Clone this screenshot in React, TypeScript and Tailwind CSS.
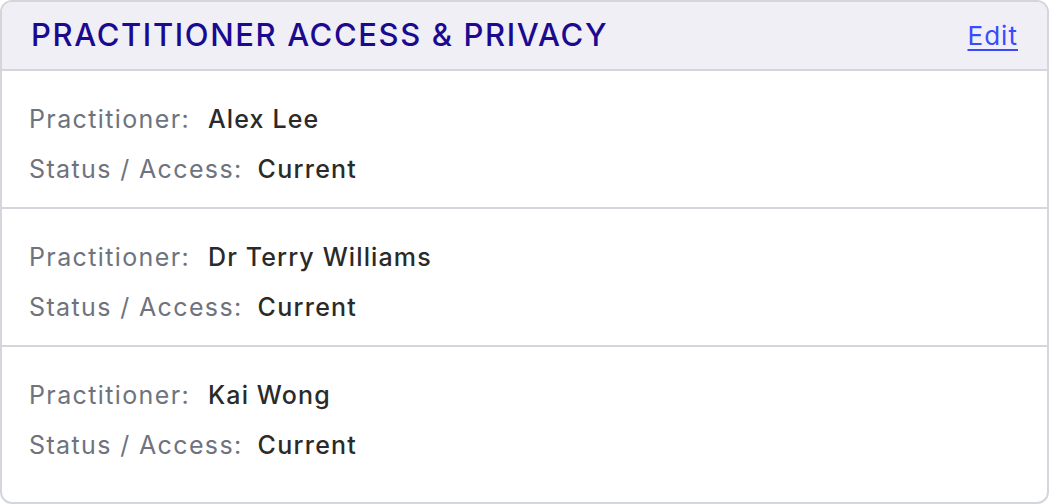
export default function App() {
  const practitioners = [
    { name: 'Alex Lee', status: 'Current' },
    { name: 'Dr Terry Williams', status: 'Current' },
    { name: 'Kai Wong', status: 'Current' },
  ];

  return (
    <div className="h-[504px] w-[1049px] bg-white" style={{ fontFamily: 'Inter, "Noto Sans", sans-serif' }}>
      <div className="h-[504px] overflow-hidden rounded-[12px] border-2 border-[#d4d6dc] bg-white">
        <div className="flex h-[69px] items-center justify-between border-b-2 border-[#d4d6dc] bg-[#f0eff5] pl-[29px] pr-[29px]">
          <h2 className="text-[31px] font-medium tracking-[0.052em] text-[#1b0a8f]">
            PRACTITIONER ACCESS &amp; PRIVACY
          </h2>
          <a href="#" className="text-[26px] tracking-[0.04em] text-[#3a4bff] underline underline-offset-4">
            Edit
          </a>
        </div>
        {practitioners.map((p, i) => (
          <div
            key={p.name}
            className={`flex flex-col gap-4 px-[27px] pt-[32px] ${
              i < practitioners.length - 1 ? 'border-b-2 border-[#d4d6dc] pb-[20px]' : 'pb-[20px]'
            }`}
          >
            <div className="flex h-[34px] items-center text-[25px]">
              <span className="tracking-[0.055em] text-[#6e737d]">Practitioner:</span>
              <span className="ml-[18px] font-medium tracking-[0.045em] text-[#2a2a2a]">{p.name}</span>
            </div>
            <div className="flex h-[34px] items-center text-[25px]">
              <span className="tracking-[0.055em] text-[#6e737d]">Status / Access:</span>
              <span className="ml-[15px] font-medium tracking-[0.05em] text-[#2a2a2a]">{p.status}</span>
            </div>
          </div>
        ))}
      </div>
    </div>
  );
}
